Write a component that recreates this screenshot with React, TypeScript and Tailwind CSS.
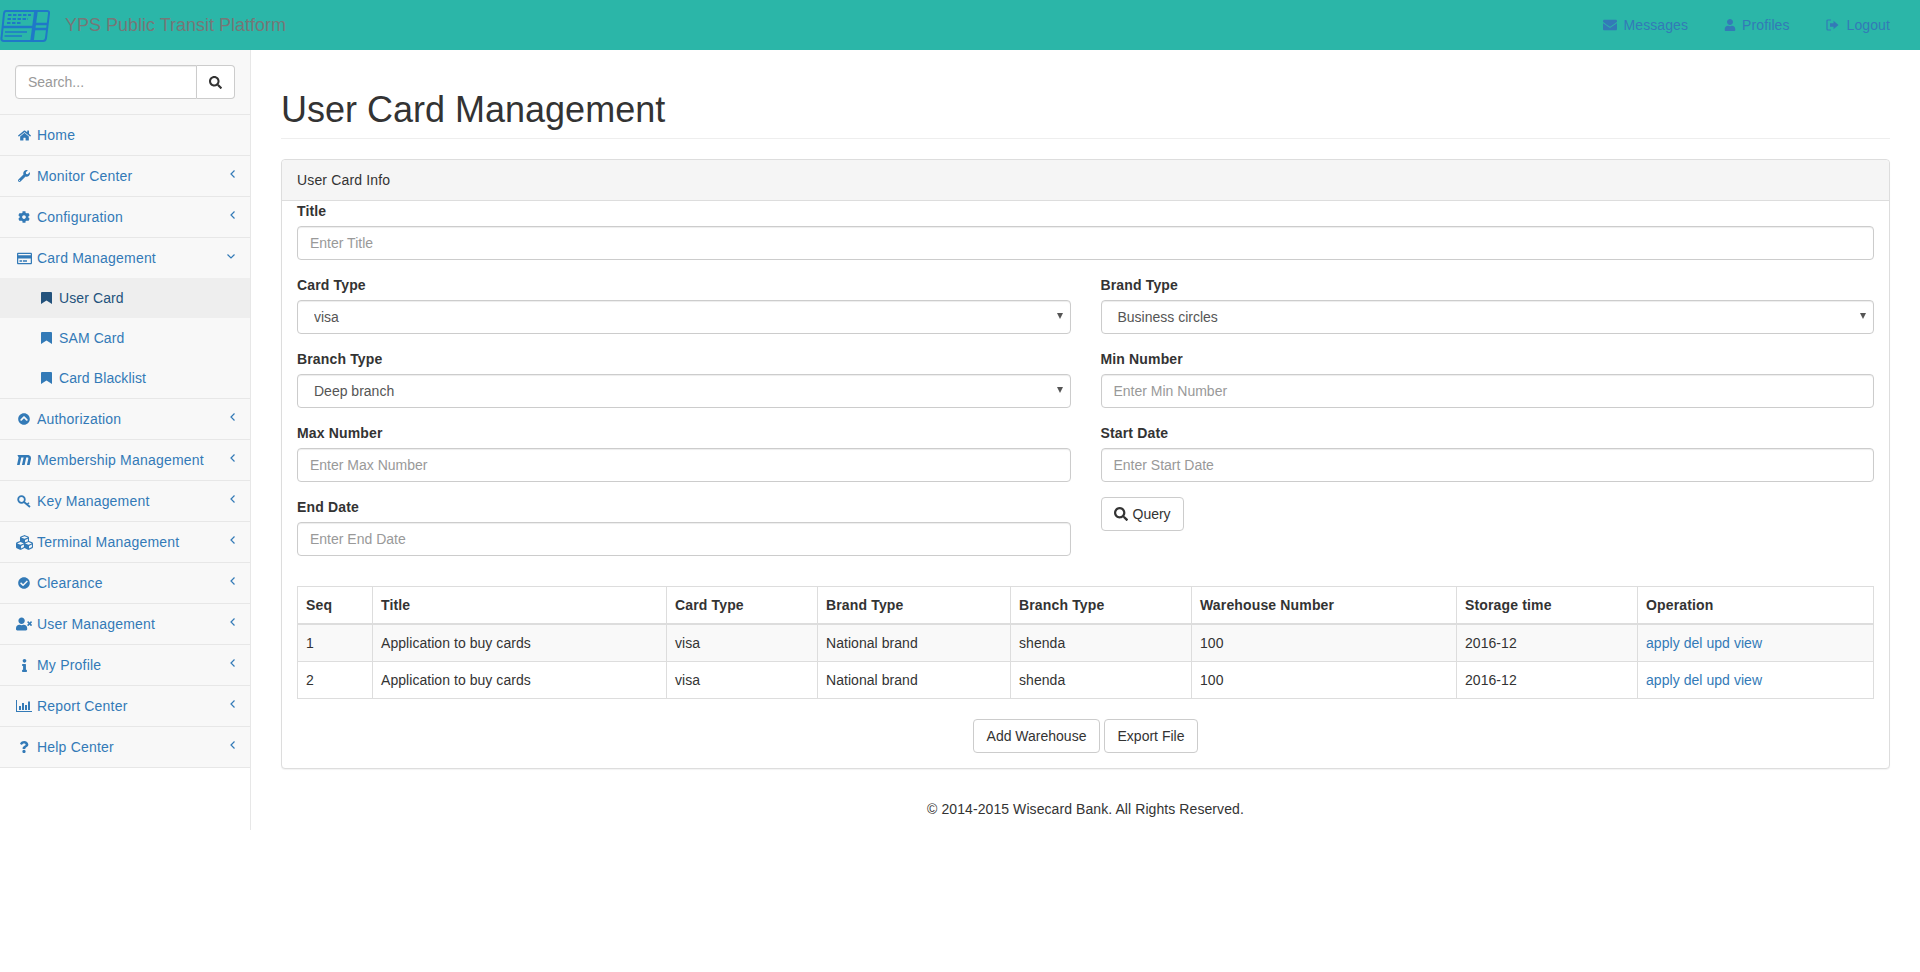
import {
  FaCheckCircle,
  FaChevronCircleUp,
  FaCog,
  FaCubes,
  FaEnvelope,
  FaHome,
  FaInfo,
  FaMaxcdn,
  FaQuestion,
  FaRegCreditCard,
  FaSearch,
  FaUser,
  FaUserTimes,
  FaWrench,
} from 'react-icons/fa';
import type { ReactNode } from 'react';

const blue = 'text-[#337ab7]';

function Logo() {
  return (
    <svg width="50" height="42" viewBox="0 0 50 42" className="shrink-0 text-[#1f78c8]" fill="none">
      <path d="M6 7 H47 Q49.500 7 49 9.500 L46 34 Q45.500 37 43 37 H4 Q1 37 1.500 34 L4 9.500 Q4.300 7 6 7 Z" stroke="currentColor" strokeWidth="2" />
      <path d="M36 7 L32 37" stroke="currentColor" strokeWidth="3.500" />
      <path d="M3 23 H33" stroke="currentColor" strokeWidth="2.500" />
      <path d="M35 20 H48 M34 25 H47" stroke="currentColor" strokeWidth="2.500" />
      <path d="M8 11 H31 M7.500 15 H28 M7 19 H22" stroke="currentColor" strokeWidth="2" strokeDasharray="3.500 1.500" />
      <path d="M5 28 H27 M4.500 32 H22" stroke="currentColor" strokeWidth="1.500" />
    </svg>
  );
}

function LogoutIcon() {
  return (
    <svg width="14" height="14" viewBox="0 0 14 14" fill="none" className="shrink-0">
      <path d="M5 2 H2 Q1 2 1 3 V11 Q1 12 2 12 H5" stroke="currentColor" strokeWidth="1.200" />
      <path d="M4 5.200 H7.500 V2.800 L12.500 7 L7.500 11.200 V8.800 H4 Z" fill="currentColor" />
    </svg>
  );
}

function ChartIcon() {
  return (
    <svg width="16" height="14" viewBox="0 0 16 14" fill="currentColor" className="shrink-0">
      <path d="M0 1 H1 V12 H16 V13 H0 Z" />
      <path d="M3 7 H5 V11 H3 Z M6 4 H8 V11 H6 Z M9 6 H11 V11 H9 Z M12 2.500 H14 V11 H12 Z" />
    </svg>
  );
}

function KeyIcon() {
  return (
    <svg width="14" height="13" viewBox="0 0 14 13" fill="none" stroke="currentColor" className="shrink-0">
      <circle cx="4.500" cy="4.500" r="3.300" strokeWidth="1.800" />
      <path d="M7 7 L13 12" strokeWidth="1.800" />
      <path d="M10 9.500 L12 7.800" strokeWidth="1.500" />
    </svg>
  );
}

function BookmarkIcon() {
  return (
    <svg width="11" height="12" viewBox="0 0 11 12" fill="currentColor" className="mr-[7px] shrink-0">
      <path d="M0 1 Q0 0 1 0 H10 Q11 0 11 1 V12 L5.500 8.500 L0 12 Z" />
    </svg>
  );
}

function TopLink({ icon, label, gap }: { icon: ReactNode; label: string; gap: string }) {
  return (
    <a className={`flex items-center tracking-[0.1px] text-[#337ab7] ${gap}`}>
      {icon}
      {label}
    </a>
  );
}

const menuTop: [ReactNode, string, boolean][] = [
  [<FaHome size={13} />, 'Home', false],
  [<FaWrench size={12} />, 'Monitor Center', true],
  [<FaCog size={12} />, 'Configuration', true],
];

const menuBottom: [ReactNode, string][] = [
  [<FaChevronCircleUp size={12} />, 'Authorization'],
  [<FaMaxcdn size={14} />, 'Membership Management'],
  [<KeyIcon />, 'Key Management'],
  [<FaCubes size={17} />, 'Terminal Management'],
  [<FaCheckCircle size={12} />, 'Clearance'],
  [<FaUserTimes size={16} />, 'User Management'],
  [<FaInfo size={13} />, 'My Profile'],
  [<ChartIcon />, 'Report Center'],
  [<FaQuestion size={12} />, 'Help Center'],
];

function MenuRow({ icon, label, arrow, open }: { icon: ReactNode; label: string; arrow?: boolean; open?: boolean }) {
  return (
    <div className={`flex h-10 items-center pl-[14px] pr-[15px] tracking-[0.2px] ${blue}`}>
      <span className="mr-[3px] flex w-[20px] shrink-0 justify-center">{icon}</span>
      <span>{label}</span>
      {arrow && (
        <span className="-mt-[4px] ml-auto">
          {open ? (
            <svg width="8" height="5" viewBox="0 0 8 5" fill="none" stroke="currentColor" strokeWidth="1.200">
              <path d="M0.500 0.500 L4 4 L7.500 0.500" />
            </svg>
          ) : (
            <svg width="5" height="8" viewBox="0 0 5 8" fill="none" stroke="currentColor" strokeWidth="1.200">
              <path d="M4.500 0.500 L1 4 L4.500 7.500" />
            </svg>
          )}
        </span>
      )}
    </div>
  );
}

function Sidebar() {
  return (
    <aside className="h-[780px] w-[251px] shrink-0 border-r border-[#e7e7e7] bg-white">
      <div className="bg-[#f8f8f8]">
        <div className="border-b border-[#e7e7e7] p-[15px]">
          <div className="flex h-[34px]">
            <input
              placeholder="Search..."
              className="min-w-0 flex-1 rounded-l border border-[#ccc] bg-white px-3 text-[14px] shadow-[inset_0_1px_1px_rgba(0,0,0,0.075)] outline-none placeholder:text-[#999]"
            />
            <button className="flex w-[38px] items-center justify-center rounded-r border border-l-0 border-[#ccc] bg-white text-[#333]">
              <FaSearch size={13} />
            </button>
          </div>
        </div>
        {menuTop.map(([icon, label, arrow]) => (
          <div key={label} className="border-b border-[#e7e7e7]">
            <MenuRow icon={icon} label={label} arrow={arrow} />
          </div>
        ))}
        <div className="border-b border-[#e7e7e7]">
          <MenuRow icon={<FaRegCreditCard size={15} />} label="Card Management" arrow open />
          <div className="flex h-10 items-center bg-[#eee] pl-[41px] tracking-[0.1px] text-[#23527c]">
            <BookmarkIcon />
            User Card
          </div>
          <div className={`flex h-10 items-center pl-[41px] tracking-[0.1px] ${blue}`}>
            <BookmarkIcon />
            SAM Card
          </div>
          <div className={`flex h-10 items-center pl-[41px] tracking-[0.1px] ${blue}`}>
            <BookmarkIcon />
            Card Blacklist
          </div>
        </div>
        {menuBottom.map(([icon, label]) => (
          <div key={label} className="border-b border-[#e7e7e7]">
            <MenuRow icon={icon} label={label} arrow />
          </div>
        ))}
      </div>
    </aside>
  );
}

function Field({ label, placeholder }: { label: string; placeholder: string }) {
  return (
    <div className="mb-[15px]">
      <label className="mb-[5px] block font-bold tracking-[0.15px]">{label}</label>
      <input
        placeholder={placeholder}
        className="block h-[34px] w-full rounded border border-[#ccc] bg-white px-3 text-[14px] text-[#555] shadow-[inset_0_1px_1px_rgba(0,0,0,0.075)] outline-none placeholder:text-[#999]"
      />
    </div>
  );
}

function SelectField({ label, value }: { label: string; value: string }) {
  return (
    <div className="mb-[15px]">
      <label className="mb-[5px] block font-bold tracking-[0.15px]">{label}</label>
      <div className="relative">
        <select
          defaultValue={value}
          className="block h-[34px] w-full appearance-none rounded border border-[#ccc] bg-white pr-3 pl-[16px] text-[14px] text-[#555] shadow-[inset_0_1px_1px_rgba(0,0,0,0.075)] outline-none"
        >
          <option>{value}</option>
        </select>
        <svg width="6" height="6" viewBox="0 0 6 6" fill="#555" className="pointer-events-none absolute top-[13px] right-[8px]">
          <path d="M0 0 H6 L3 6 Z" />
        </svg>
      </div>
    </div>
  );
}

const headers = ['Seq', 'Title', 'Card Type', 'Brand Type', 'Branch Type', 'Warehouse Number', 'Storage time', 'Operation'];
const rows = [
  ['1', 'Application to buy cards', 'visa', 'National brand', 'shenda', '100', '2016-12'],
  ['2', 'Application to buy cards', 'visa', 'National brand', 'shenda', '100', '2016-12'],
];

function CardTable() {
  return (
    <table className="w-full table-fixed border-collapse border border-[#ddd]">
      <colgroup>
        <col className="w-[75px]" />
        <col className="w-[294px]" />
        <col className="w-[151px]" />
        <col className="w-[193px]" />
        <col className="w-[181px]" />
        <col className="w-[265px]" />
        <col className="w-[181px]" />
        <col />
      </colgroup>
      <thead>
        <tr>
          {headers.map((h) => (
            <th key={h} className="border border-b-2 border-[#ddd] p-2 text-left font-bold tracking-[0.15px]">
              {h}
            </th>
          ))}
        </tr>
      </thead>
      <tbody className="tracking-[0.05px]">
        {rows.map((row, i) => (
          <tr key={row[0]} className={i === 0 ? 'bg-[#f9f9f9]' : ''}>
            {row.map((cell, j) => (
              <td key={j} className="border border-[#ddd] p-2">
                {cell}
              </td>
            ))}
            <td className={`border border-[#ddd] p-2 ${blue}`}>apply del upd view</td>
          </tr>
        ))}
      </tbody>
    </table>
  );
}

export default function App() {
  return (
    <div className="min-h-[972px] bg-white font-['Liberation_Sans',Arial,sans-serif] text-[14px] leading-[20px] text-[#333]">
      <nav className="flex h-[50px] items-center bg-[#2bb6a8]">
        <Logo />
        <span className="ml-[15px] text-[18px] text-[#777]">YPS Public Transit Platform</span>
        <div className="ml-auto flex items-center pr-[30px]">
          <TopLink icon={<FaEnvelope size={14} />} label="Messages" gap="gap-[6px] mr-[36px]" />
          <TopLink icon={<FaUser size={12} />} label="Profiles" gap="gap-[6px] mr-[36px]" />
          <TopLink icon={<LogoutIcon />} label="Logout" gap="gap-[7px]" />
        </div>
      </nav>
      <div className="flex">
        <Sidebar />
        <main className="min-w-0 flex-1 px-[30px]">
          <h1 className="mt-[40px] mb-[20px] border-b border-[#eee] pb-[8px] text-[36px] leading-[39.6px] font-medium">
            User Card Management
          </h1>
          <section className="rounded border border-[#ddd] bg-white shadow-[0_1px_1px_rgba(0,0,0,0.05)]">
            <div className="rounded-t border-b border-[#ddd] bg-[#f5f5f5] px-[15px] py-[10px] tracking-[0.15px]">User Card Info</div>
            <div className="px-[15px] pb-[15px]">
              <Field label="Title" placeholder="Enter Title" />
              <div className="grid grid-cols-2 gap-x-[30px]">
                <SelectField label="Card Type" value="visa" />
                <SelectField label="Brand Type" value="Business circles" />
                <SelectField label="Branch Type" value="Deep branch" />
                <Field label="Min Number" placeholder="Enter Min Number" />
                <Field label="Max Number" placeholder="Enter Max Number" />
                <Field label="Start Date" placeholder="Enter Start Date" />
                <Field label="End Date" placeholder="Enter End Date" />
                <div>
                  <button className="flex h-[34px] items-center gap-[5px] rounded border border-[#ccc] bg-white px-3">
                    <FaSearch size={14} />
                    Query
                  </button>
                </div>
              </div>
              <div className="mt-[15px]">
                <CardTable />
              </div>
              <div className="mt-[20px] flex justify-center gap-[4px]">
                <button className="h-[34px] w-[127px] rounded border border-[#ccc] bg-white">Add Warehouse</button>
                <button className="h-[34px] w-[94px] rounded border border-[#ccc] bg-white">Export File</button>
              </div>
            </div>
          </section>
          <p className="mt-[30px] text-center tracking-[0.08px]">© 2014-2015 Wisecard Bank. All Rights Reserved.</p>
        </main>
      </div>
    </div>
  );
}
